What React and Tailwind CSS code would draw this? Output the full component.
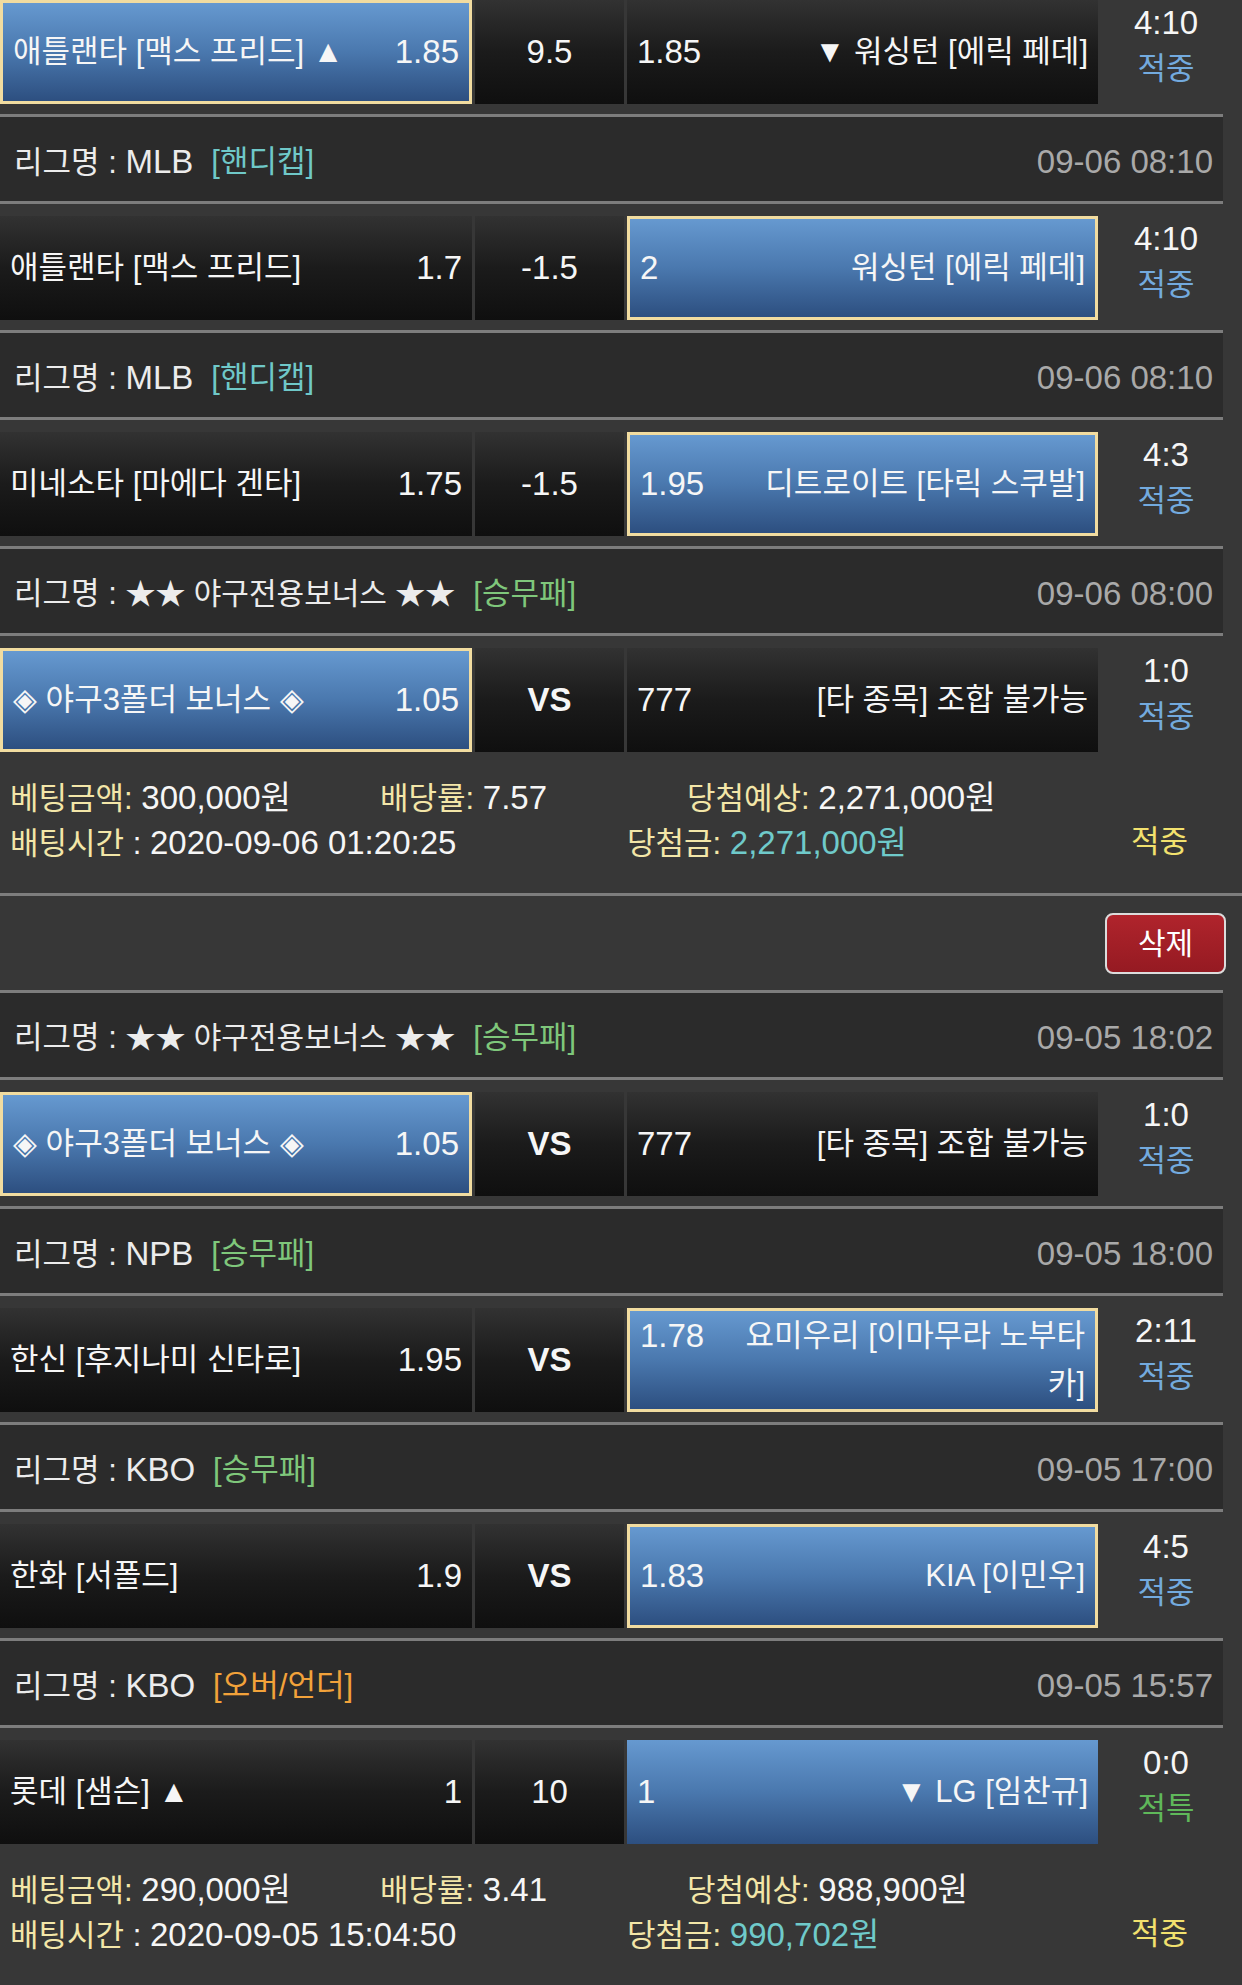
import React from 'react'

const tagColor = {
  '핸디캡': 'text-[#6fc8c8]',
  '승무패': 'text-[#7fc77b]',
  '오버/언더': 'text-[#f2a23a]',
}

const rows = [
  { type: 'match', first: true, left: { name: '애틀랜타 [맥스 프리드] ▲', odds: '1.85', sel: true }, mid: '9.5', right: { odds: '1.85', name: '▼ 워싱턴 [에릭 페데]' }, score: '4:10', result: '적중' },
  { type: 'league', name: 'MLB', tag: '핸디캡', date: '09-06 08:10' },
  { type: 'match', left: { name: '애틀랜타 [맥스 프리드]', odds: '1.7' }, mid: '-1.5', right: { odds: '2', name: '워싱턴 [에릭 페데]', sel: true }, score: '4:10', result: '적중' },
  { type: 'league', name: 'MLB', tag: '핸디캡', date: '09-06 08:10' },
  { type: 'match', left: { name: '미네소타 [마에다 겐타]', odds: '1.75' }, mid: '-1.5', right: { odds: '1.95', name: '디트로이트 [타릭 스쿠발]', sel: true }, score: '4:3', result: '적중' },
  { type: 'league', name: '★★ 야구전용보너스 ★★', bonus: true, tag: '승무패', date: '09-06 08:00' },
  { type: 'match', left: { name: '◈ 야구3폴더 보너스 ◈', odds: '1.05', sel: true }, mid: 'VS', right: { odds: '777', name: '[타 종목] 조합 불가능' }, score: '1:0', result: '적중' },
  { type: 'summary', amount: '300,000원', rate: '7.57', expect: '2,271,000원', time: '2020-09-06 01:20:25', win: '2,271,000원' },
  { type: 'delete' },
  { type: 'league', name: '★★ 야구전용보너스 ★★', bonus: true, tag: '승무패', date: '09-05 18:02' },
  { type: 'match', left: { name: '◈ 야구3폴더 보너스 ◈', odds: '1.05', sel: true }, mid: 'VS', right: { odds: '777', name: '[타 종목] 조합 불가능' }, score: '1:0', result: '적중' },
  { type: 'league', name: 'NPB', tag: '승무패', date: '09-05 18:00' },
  { type: 'match', left: { name: '한신 [후지나미 신타로]', odds: '1.95' }, mid: 'VS', right: { odds: '1.78', name: '요미우리 [이마무라 노부타카]', sel: true }, score: '2:11', result: '적중' },
  { type: 'league', name: 'KBO', tag: '승무패', date: '09-05 17:00' },
  { type: 'match', left: { name: '한화 [서폴드]', odds: '1.9' }, mid: 'VS', right: { odds: '1.83', name: 'KIA [이민우]', sel: true }, score: '4:5', result: '적중' },
  { type: 'league', name: 'KBO', tag: '오버/언더', date: '09-05 15:57' },
  { type: 'match', left: { name: '롯데 [샘슨] ▲', odds: '1' }, mid: '10', right: { odds: '1', name: '▼ LG [임찬규]', blue: true }, score: '0:0', result: '적특' },
  { type: 'summary', amount: '290,000원', rate: '3.41', expect: '988,900원', time: '2020-09-05 15:04:50', win: '990,702원' },
]

function cellBg(side) {
  if (side.sel) return 'bg-linear-to-b from-[#6699d0] via-[#4a78ae] to-[#2d4f80] border-[3px] border-[#f1dca0]'
  if (side.blue) return 'bg-linear-to-b from-[#6699d0] via-[#4a78ae] to-[#2d4f80]'
  return 'bg-linear-to-b from-[#323232] via-[#1b1b1b] to-[#0f0f0f]'
}

function MatchRow({ m }) {
  const { left, right } = m
  return (
    <div className={`flex ${m.first ? 'pb-[10px]' : 'pt-[12px] pb-[10px]'}`}>
      <div className={`w-[472px] h-[104px] flex items-center justify-between px-[10px] ${cellBg(left)}`}>
        <span>{left.name}</span>
        <span className="text-[33px]">{left.odds}</span>
      </div>
      <div className="ml-[3px] w-[149px] h-[104px] flex items-center justify-center bg-linear-to-b from-[#323232] via-[#1b1b1b] to-[#0f0f0f]">
        <span className={m.mid === 'VS' ? 'font-bold text-[33px]' : 'text-[33px]'}>{m.mid}</span>
      </div>
      <div className={`ml-[3px] w-[471px] h-[104px] flex items-center px-[10px] leading-[48px] ${cellBg(right)}`}>
        <div className="w-full flex items-start">
          <span className="shrink-0 text-[33px]">{right.odds}</span>
          <span className="flex-1 min-w-0 ml-[30px] text-right">{right.name}</span>
        </div>
      </div>
      <div className="flex-1 h-[104px] pr-[8px] flex flex-col items-center justify-center leading-[46px] pb-[12px]">
        <span className="text-[33px]">{m.score}</span>
        <span className={m.result === '적특' ? 'text-[#5fb85a]' : 'text-[#73aade]'}>{m.result}</span>
      </div>
    </div>
  )
}

function LeagueRow({ l }) {
  return (
    <div className="w-[1223px] h-[90px] border-y-[3px] border-[#7d7d7d] bg-[#2b2b2b] flex items-center justify-between pl-[14px] pr-[10px] pt-[6px]">
      <div className="flex items-center text-[#ececec]">
        <span>리그명 : <span className={l.bonus ? 'text-[30px]' : 'text-[33px]'}>{l.name}</span></span>
        <span className={`ml-[18px] ${tagColor[l.tag]}`}>[{l.tag}]</span>
      </div>
      <span className="text-[#a9a9a9] text-[33px]">{l.date}</span>
    </div>
  )
}

function Summary({ s }) {
  return (
    <div className="h-[131px] pl-[10px] pt-[13px]">
      <div className="flex items-center h-[45px] overflow-hidden">
        <div className="w-[370px]"><span className="text-[#f3e6a8]">베팅금액:</span> <span className="text-[33px]">{s.amount}</span></div>
        <div className="w-[307px]"><span className="text-[#f3e6a8]">배당률:</span> <span className="text-[33px]">{s.rate}</span></div>
        <div><span className="text-[#f3e6a8]">당첨예상:</span> <span className="text-[33px]">{s.expect}</span></div>
      </div>
      <div className="flex items-center h-[45px] overflow-hidden">
        <div className="w-[617px]"><span className="text-[#f3e6a8]">배팅시간</span> : <span className="text-[33px]">{s.time}</span></div>
        <div className="w-[504px]"><span className="text-[#f3e6a8]">당첨금:</span> <span className="text-[#6fcaca] text-[33px]">{s.win}</span></div>
        <div className="text-[#f2e16e]">적중</div>
      </div>
    </div>
  )
}

function DeleteBar() {
  return (
    <div className="border-t-[3px] border-[#7d7d7d] h-[97px] flex justify-end items-start pt-[17px] pr-[16px]">
      <button className="w-[121px] h-[61px] rounded-[8px] border-[2px] border-[#dcdcdc] bg-linear-to-b from-[#b0242c] to-[#951a22] text-white text-[30px] flex items-center justify-center">
        삭제
      </button>
    </div>
  )
}

export default function App() {
  return (
    <div className="w-[1242px] min-h-screen bg-[#373737] text-[#f6f6f6] text-[31px] font-['Liberation_Sans','Noto_Sans_CJK_KR',sans-serif] overflow-hidden">
      {rows.map((r, i) => {
        if (r.type === 'match') return <MatchRow key={i} m={r} />
        if (r.type === 'league') return <LeagueRow key={i} l={r} />
        if (r.type === 'summary') return <Summary key={i} s={r} />
        return <DeleteBar key={i} />
      })}
    </div>
  )
}
